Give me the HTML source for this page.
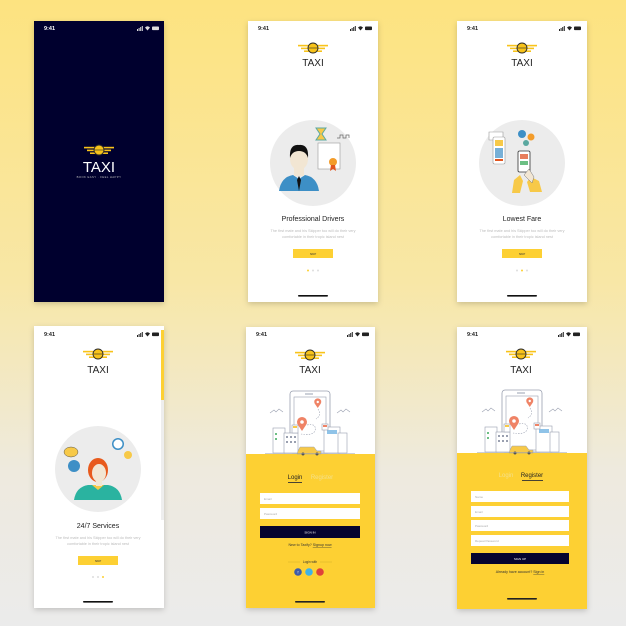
<!DOCTYPE html>
<html><head><meta charset="utf-8"><style>
html,body{margin:0;padding:0;}
body{width:626px;height:626px;overflow:hidden;background:linear-gradient(180deg,#fde380 0%,#f8e7a6 45%,#eeeade 75%,#ebebeb 100%);font-family:"Liberation Sans",sans-serif;}
svg{display:block}
</style></head><body>
<svg width="626" height="626" viewBox="0 0 626 626" xmlns="http://www.w3.org/2000/svg" font-family="Liberation Sans, sans-serif">
<defs>
<filter id="sh" x="-20%" y="-20%" width="140%" height="140%"><feDropShadow dx="0" dy="2" stdDeviation="3" flood-color="#000" flood-opacity="0.18"/></filter>
<g id="logo">
  <rect x="-15" y="-3.2" width="30" height="1.6" fill="#f8c31a"/>
  <rect x="-12" y="-0.4" width="24" height="1.6" fill="#f8c31a"/>
  <rect x="-9" y="2.4" width="18" height="1.6" fill="#f8c31a"/>
  <circle cx="0" cy="0" r="5" fill="#f8c31a" stroke="#2a2a2a" stroke-width="0.9"/>
  <line x1="-5" y1="0" x2="5" y2="0" stroke="#2a2a2a" stroke-width="0.6"/>
</g>
<g id="status">
  <rect x="0" y="4" width="1" height="2" fill="#222"/><rect x="1.6" y="3" width="1" height="3" fill="#222"/><rect x="3.2" y="2" width="1" height="4" fill="#222"/><rect x="4.8" y="1" width="1" height="5" fill="#222"/>
  <path d="M8 2.5 Q10.5 0 13 2.5 L10.5 5.5Z" fill="#222"/>
  <rect x="15" y="1.5" width="7" height="3.6" rx="0.8" fill="#222"/>
</g>
<g id="city">
  <!-- phone -->
  <rect x="-20" y="-62" width="40" height="62" rx="3" fill="#fff" stroke="#9aa0b0" stroke-width="0.8"/>
  <rect x="-16" y="-56" width="32" height="54" fill="#fff" stroke="#9aa0b0" stroke-width="0.6"/>
  <rect x="-5" y="-59.5" width="8" height="1" fill="#9aa0b0"/>
  <path d="M-40 -40 l4 -3 l2 2 l3 -3 l4 3" stroke="#9aa0b0" stroke-width="0.6" fill="none"/>
  <path d="M27 -40 l4 -3 l2 2 l3 -3 l4 3" stroke="#9aa0b0" stroke-width="0.6" fill="none"/>
  <!-- buildings -->
  <rect x="-37" y="-25" width="12" height="25" fill="#fff" stroke="#9aa0b0" stroke-width="0.6"/>
  <rect x="-26" y="-20" width="14" height="20" fill="#fff" stroke="#9aa0b0" stroke-width="0.6"/>
  <rect x="-24" y="-17" width="2" height="2" fill="#9aa0b0"/><rect x="-20" y="-17" width="2" height="2" fill="#9aa0b0"/><rect x="-16" y="-17" width="2" height="2" fill="#9aa0b0"/>
  <rect x="-24" y="-12" width="2" height="2" fill="#9aa0b0"/><rect x="-20" y="-12" width="2" height="2" fill="#9aa0b0"/><rect x="-16" y="-12" width="2" height="2" fill="#9aa0b0"/>
  <rect x="-35" y="-20" width="2" height="2" fill="#6cbf84"/><rect x="-35" y="-15" width="2" height="2" fill="#6cbf84"/>
  <rect x="-18" y="-28" width="6" height="8" fill="#fff" stroke="#9aa0b0" stroke-width="0.6"/><rect x="-17" y="-27" width="4" height="2" fill="#f7c948"/>
  <rect x="14" y="-26" width="16" height="26" fill="#fff" stroke="#9aa0b0" stroke-width="0.6"/>
  <rect x="17" y="-23" width="10" height="4" fill="#8fc3e8"/>
  <rect x="28" y="-20" width="9" height="20" fill="#fff" stroke="#9aa0b0" stroke-width="0.6"/>
  <rect x="12" y="-29" width="6" height="6" fill="#fff" stroke="#9aa0b0" stroke-width="0.6"/><rect x="13" y="-28" width="4" height="2" fill="#ef8366"/>
  <!-- pins -->
  <path d="M-12 -28 a5 5 0 1 1 8 0 l-4 6z" fill="#ef8366"/><circle cx="-8" cy="-31" r="1.8" fill="#fff"/>
  <path d="M5 -49 a3.5 3.5 0 1 1 5.5 0 l-2.75 4z" fill="#ef8366"/><circle cx="7.75" cy="-51" r="1.2" fill="#fff"/>
  <path d="M-3 -28 q10 -2 8 6 q-3 5 -14 3" stroke="#9aa0b0" stroke-width="0.6" stroke-dasharray="1.5 1.2" fill="none"/>
  <path d="M8 -44 q4 6 -2 10" stroke="#9aa0b0" stroke-width="0.6" stroke-dasharray="1.5 1.2" fill="none"/>
  <!-- taxi -->
  <path d="M-12 -2 l2 -4 h14 l3 4 h4 v3 h-24z" fill="#f7c948" stroke="#9aa0b0" stroke-width="0.5"/>
  <circle cx="-7" cy="1" r="1.5" fill="#555"/><circle cx="7" cy="1" r="1.5" fill="#555"/>
  <line x1="-45" y1="0.5" x2="45" y2="0.5" stroke="#9aa0b0" stroke-width="0.6"/>
</g>
</defs>

<!-- Phone 1 splash -->
<g filter="url(#sh)"><rect x="34" y="21" width="130" height="281" fill="#05042f"/></g>
<text x="44" y="30" font-size="5.5" font-weight="bold" fill="#fff">9:41</text>
<use href="#status" x="137" y="25" style="filter:invert(1)"/>
<g transform="translate(99,150) scale(1.0)"><use href="#logo"/></g>
<text x="99" y="172" font-size="15" fill="#fff" text-anchor="middle">TAXI</text>
<text x="99" y="178" font-size="2.8" fill="#bbb" text-anchor="middle" letter-spacing="0.4">BOOK EASY · FEEL HAPPY</text>

<!-- Phone 2 -->
<g filter="url(#sh)"><rect x="248" y="21" width="130" height="281" fill="#fff"/></g>
<text x="258" y="30" font-size="5.5" font-weight="bold" fill="#222">9:41</text>
<use href="#status" x="350" y="25"/>
<g transform="translate(313,48)"><use href="#logo"/></g>
<text x="313" y="66" font-size="10" fill="#222" text-anchor="middle">TAXI</text>
<circle cx="313" cy="163" r="43" fill="#ececec"/>
<path d="M279 191 q2 -14 14 -16 l6 4 l6 -4 q12 2 14 16z" fill="#3d8fc6"/>
<path d="M297 180 l2 -4 l2 4 l-2 11z" fill="#111"/>
<rect x="294" y="167" width="10" height="9" fill="#f2e6d3"/>
<ellipse cx="299" cy="159" rx="9" ry="11" fill="#f2e6d3"/>
<path d="M290 158 q-1 -14 9 -13 q10 -1 9 13 q-2 -7 -9 -7 q-7 0 -9 7z" fill="#111"/>
<rect x="318" y="143" width="22" height="26" fill="#fff" stroke="#999" stroke-width="0.6"/>
<path d="M316 128 h10 l-4 6 l4 6 h-10 l4 -6z" fill="#f7c948" stroke="#5aa8a0" stroke-width="1"/>
<circle cx="333" cy="162" r="4" fill="#f39c2a"/><path d="M331 165 l-1 6 l3 -2 l3 2 l-1 -6" fill="#e2551f"/>
<path d="M337 138 h3 v-3 h3 v3 h3 v-3 h3 v3" stroke="#666" stroke-width="0.7" fill="none"/>
<text x="313" y="221" font-size="7" fill="#222" text-anchor="middle">Professional Drivers</text>
<text x="313" y="232" font-size="3.8" fill="#bbb" text-anchor="middle">The first mate and his Skipper too will do their very</text>
<text x="313" y="238" font-size="3.8" fill="#bbb" text-anchor="middle">comfortable in their tropic island nest</text>
<rect x="293" y="249" width="40" height="9" fill="#fdd033"/>
<text x="313" y="255" font-size="2.8" fill="#333" text-anchor="middle">SKIP</text>
<circle cx="308" cy="270.5" r="1" fill="#fdd033"/><circle cx="313" cy="270.5" r="1" fill="#ddd"/><circle cx="318" cy="270.5" r="1" fill="#ddd"/>
<rect x="298" y="295" width="30" height="1.6" rx="0.8" fill="#111"/>

<!-- Phone 3 -->
<g filter="url(#sh)"><rect x="457" y="21" width="130" height="281" fill="#fff"/></g>
<text x="467" y="30" font-size="5.5" font-weight="bold" fill="#222">9:41</text>
<use href="#status" x="559" y="25"/>
<g transform="translate(522,48)"><use href="#logo"/></g>
<text x="522" y="66" font-size="10" fill="#222" text-anchor="middle">TAXI</text>
<circle cx="522" cy="163" r="43" fill="#ececec"/>
<path d="M489 132 h14 v8 h-14z" fill="#fff" stroke="#999" stroke-width="0.6"/>
<rect x="493" y="137" width="12" height="27" rx="1.5" fill="#fff" stroke="#999" stroke-width="0.6"/>
<rect x="495" y="140" width="8" height="6" fill="#f7c948"/>
<rect x="495" y="148" width="8" height="10" fill="#3d8fc6" opacity="0.7"/>
<rect x="495" y="159" width="8" height="2" fill="#e2551f"/>
<circle cx="522" cy="134" r="4" fill="#3d8fc6"/><circle cx="531" cy="137" r="3.5" fill="#f39c2a"/><circle cx="526" cy="143" r="3" fill="#5aa8a0"/>
<rect x="518" y="151" width="12" height="21" rx="1.5" fill="#fff" stroke="#333" stroke-width="0.8"/>
<rect x="520" y="154" width="8" height="5" fill="#e87d5b"/><rect x="520" y="161" width="8" height="4" fill="#6cbf84"/>
<path d="M512 193 l2 -13 l6 -5 l3 6 l-3 12z" fill="#f7c948"/>
<path d="M530 192 l-3 -10 l4 -5 l8 4 l3 11z" fill="#f7c948"/>
<path d="M524 175 l5 -6 l5 8 l-2 6z" fill="#f2e6d3" stroke="#777" stroke-width="0.5"/>
<text x="522" y="221" font-size="7" fill="#222" text-anchor="middle">Lowest Fare</text>
<text x="522" y="232" font-size="3.8" fill="#bbb" text-anchor="middle">The first mate and his Skipper too will do their very</text>
<text x="522" y="238" font-size="3.8" fill="#bbb" text-anchor="middle">comfortable in their tropic island nest</text>
<rect x="502" y="249" width="40" height="9" fill="#fdd033"/>
<text x="522" y="255" font-size="2.8" fill="#333" text-anchor="middle">SKIP</text>
<circle cx="517" cy="270.5" r="1" fill="#ddd"/><circle cx="522" cy="270.5" r="1" fill="#fdd033"/><circle cx="527" cy="270.5" r="1" fill="#ddd"/>
<rect x="507" y="295" width="30" height="1.6" rx="0.8" fill="#111"/>

<!-- Phone 4 -->
<g filter="url(#sh)"><rect x="34" y="326" width="130" height="282" fill="#fff"/></g>
<rect x="161" y="330" width="3" height="70" fill="#fdd033"/>
<rect x="161" y="400" width="3" height="120" fill="#eee"/>
<text x="44" y="336" font-size="5.5" font-weight="bold" fill="#222">9:41</text>
<use href="#status" x="137" y="331"/>
<g transform="translate(98,354)"><use href="#logo"/></g>
<text x="98" y="373" font-size="10" fill="#222" text-anchor="middle">TAXI</text>
<circle cx="98" cy="469" r="43" fill="#ececec"/>
<path d="M74 500 q2 -13 14 -15 h20 q12 2 14 15z" fill="#2ab3a0"/>
<path d="M92 485 l6 5 l6 -5" fill="#f7c948"/>
<ellipse cx="98" cy="470" rx="10" ry="12" fill="#e85a1c"/>
<ellipse cx="99" cy="473" rx="7" ry="9" fill="#f2e6d3"/>
<rect x="96" y="480" width="6" height="6" fill="#f2e6d3"/>
<circle cx="74" cy="466" r="6" fill="#3d8fc6"/>
<ellipse cx="71" cy="452" rx="7" ry="5" fill="#f7c948" stroke="#555" stroke-width="0.5"/>
<circle cx="118" cy="444" r="6" fill="#3d8fc6"/><circle cx="118" cy="444" r="4.5" fill="#fff"/>
<circle cx="128" cy="455" r="4" fill="#f7c948"/>
<text x="98" y="528" font-size="7" fill="#222" text-anchor="middle">24/7 Services</text>
<text x="98" y="539" font-size="3.8" fill="#bbb" text-anchor="middle">The first mate and his Skipper too will do their very</text>
<text x="98" y="545" font-size="3.8" fill="#bbb" text-anchor="middle">comfortable in their tropic island nest</text>
<rect x="78" y="556" width="40" height="9" fill="#fdd033"/>
<text x="98" y="562" font-size="2.8" fill="#333" text-anchor="middle">SKIP</text>
<circle cx="93" cy="577" r="1" fill="#ddd"/><circle cx="98" cy="577" r="1" fill="#ddd"/><circle cx="103" cy="577" r="1" fill="#fdd033"/>
<rect x="83" y="601" width="30" height="1.6" rx="0.8" fill="#111"/>

<!-- Phone 5 login -->
<g filter="url(#sh)"><rect x="246" y="327" width="129" height="281" fill="#fff"/></g>
<rect x="246" y="454" width="129" height="154" fill="#fdd033"/>
<text x="256" y="336" font-size="5.5" font-weight="bold" fill="#222">9:41</text>
<use href="#status" x="347" y="331"/>
<g transform="translate(310,355)"><use href="#logo"/></g>
<text x="310" y="373" font-size="10" fill="#222" text-anchor="middle">TAXI</text>
<g transform="translate(310,453)"><use href="#city"/></g>
<text x="295" y="479" font-size="6" fill="#222" text-anchor="middle">Login</text>
<rect x="288" y="482" width="14" height="0.9" fill="#333"/>
<text x="322" y="479" font-size="6" fill="#f4e08a" text-anchor="middle">Register</text>
<rect x="260" y="493" width="100" height="11" fill="#fff"/>
<text x="264" y="500" font-size="3" fill="#aaa">Email</text>
<rect x="260" y="508" width="100" height="11" fill="#fff"/>
<text x="264" y="515" font-size="3" fill="#aaa">Password</text>
<rect x="260" y="526" width="100" height="12" fill="#05042f"/>
<text x="310" y="533.5" font-size="3" fill="#fff" text-anchor="middle">SIGN IN</text>
<text x="310" y="546" font-size="3.6" fill="#333" text-anchor="middle">New to Taxify? <tspan text-decoration="underline">Signup now</tspan></text>
<line x1="288" y1="562" x2="300" y2="562" stroke="#c9a92a" stroke-width="0.4"/>
<line x1="320" y1="562" x2="332" y2="562" stroke="#c9a92a" stroke-width="0.4"/>
<text x="310" y="563" font-size="3.2" fill="#333" text-anchor="middle">Login with</text>
<circle cx="298" cy="572" r="3.8" fill="#3d5ca8"/><circle cx="309" cy="572" r="3.8" fill="#3fb2e8"/><circle cx="320" cy="572" r="3.8" fill="#e0413a"/>
<text x="298" y="573.5" font-size="3.5" fill="#fff" text-anchor="middle">f</text>
<rect x="295" y="601" width="30" height="1.6" rx="0.8" fill="#222"/>

<!-- Phone 6 register -->
<g filter="url(#sh)"><rect x="457" y="327" width="130" height="282" fill="#fff"/></g>
<rect x="457" y="453" width="130" height="156" fill="#fdd033"/>
<text x="467" y="336" font-size="5.5" font-weight="bold" fill="#222">9:41</text>
<use href="#status" x="558" y="331"/>
<g transform="translate(521,354)"><use href="#logo"/></g>
<text x="521" y="373" font-size="10" fill="#222" text-anchor="middle">TAXI</text>
<g transform="translate(522,452)"><use href="#city"/></g>
<text x="506" y="477" font-size="6" fill="#f4e08a" text-anchor="middle">Login</text>
<text x="532" y="477" font-size="6" fill="#222" text-anchor="middle">Register</text>
<rect x="522" y="480" width="21" height="0.9" fill="#333"/>
<rect x="471" y="491" width="98" height="11" fill="#fff"/><text x="475" y="498" font-size="3" fill="#aaa">Name</text>
<rect x="471" y="506" width="98" height="11" fill="#fff"/><text x="475" y="513" font-size="3" fill="#aaa">Email</text>
<rect x="471" y="520" width="98" height="11" fill="#fff"/><text x="475" y="527" font-size="3" fill="#aaa">Password</text>
<rect x="471" y="535" width="98" height="11" fill="#fff"/><text x="475" y="542" font-size="3" fill="#aaa">Repeat Password</text>
<rect x="471" y="553" width="98" height="11" fill="#05042f"/>
<text x="520" y="560" font-size="3" fill="#fff" text-anchor="middle">SIGN UP</text>
<text x="520" y="573" font-size="3.6" fill="#333" text-anchor="middle">Already have account? <tspan text-decoration="underline">Sign in</tspan></text>
<rect x="507" y="598" width="30" height="1.6" rx="0.8" fill="#222"/>
</svg>
</body></html>
